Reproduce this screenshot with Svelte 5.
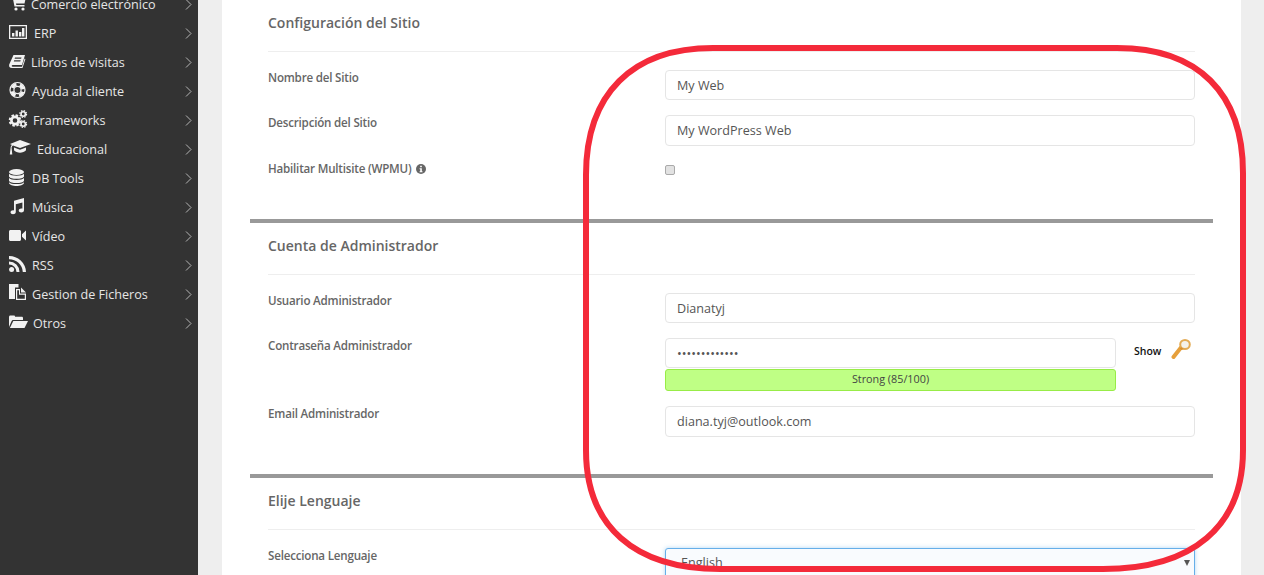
<script lang="ts">
	const menu = [
		{ label: 'Comercio electrónico', icon: 'cart', gap: 4 },
		{ label: 'ERP', icon: 'chart', gap: 7 },
		{ label: 'Libros de visitas', icon: 'book', gap: 4 },
		{ label: 'Ayuda al cliente', icon: 'life', gap: 5 },
		{ label: 'Frameworks', icon: 'cogs', gap: 6 },
		{ label: 'Educacional', icon: 'grad', gap: 10 },
		{ label: 'DB Tools', icon: 'db', gap: 5 },
		{ label: 'Música', icon: 'music', gap: 5 },
		{ label: 'Vídeo', icon: 'video', gap: 5 },
		{ label: 'RSS', icon: 'rss', gap: 5 },
		{ label: 'Gestion de Ficheros', icon: 'files', gap: 5 },
		{ label: 'Otros', icon: 'folder', gap: 6 }
	];
</script>

<div class="page">
	<aside class="sidebar">
		{#each menu as item}
			<div class="item">
				<svg class="icon" viewBox="0 0 18 18" fill="currentColor">
					{#if item.icon === 'cart'}
						<path d="M3 0h2.500l.5 2h11l-1.500 6.500H7l.3 1.500h8.200v1.500H5.500L3.500 1.500H3z" /><circle cx="7" cy="14" r="1.600" /><circle cx="14" cy="14" r="1.600" />
					{:else if item.icon === 'chart'}
						<path fill-rule="evenodd" d="M0 1h18v14H0zM1.300 2.300v11.400h15.400V2.300z" /><path d="M3 9h2.400v3.500H3zM6.500 6.500h2.400v6H6.500zM10 8h2.400v4.500H10zM13 4h2.400v8.500H13z" />
					{:else if item.icon === 'book'}
						<path fill-rule="evenodd" d="M4.500 2H16l-3 10H3.800c-1.500 0-1.500 1.800 0 1.800H13l2.600-8.300.8.500-2.900 9H3c-2.500 0-3.300-1.500-2.800-3.500zM6 4.500l-.4 1.200h6.500l.4-1.200zM5.200 7.200l-.4 1.200h6.500l.4-1.200z" />
					{:else if item.icon === 'life'}
						<g fill="none" stroke="currentColor">
							<circle cx="8.500" cy="8" r="7.500" stroke-width="1.200" />
							<circle cx="8.500" cy="8" r="3.600" stroke-width="1.200" />
							<circle cx="8.500" cy="8" r="5.600" stroke-width="3.200" stroke-dasharray="5.200 3.600" stroke-dashoffset="-1.800" />
						</g>
					{:else if item.icon === 'cogs'}
						<g fill="none" stroke="currentColor">
							<circle cx="6" cy="9.500" r="3.600" stroke-width="2.600" />
							<circle cx="6" cy="9.500" r="5.300" stroke-width="2" stroke-dasharray="2.500 1.660" />
							<circle cx="14.200" cy="3" r="2.200" stroke-width="1.600" />
							<circle cx="14.200" cy="3" r="3.400" stroke-width="1.200" stroke-dasharray="1.500 1.170" />
							<circle cx="14.200" cy="13" r="2.200" stroke-width="1.600" />
							<circle cx="14.200" cy="13" r="3.400" stroke-width="1.200" stroke-dasharray="1.500 1.170" />
						</g>
					{:else if item.icon === 'grad'}
						<path d="M11 0l11 4-11 4-7-2.600c-1 .4-1.300 1.300-1.400 2.500l.7 6.600H.8l.8-6.600C1.700 6.400 2 5.400 3 4.900L1 4z" /><path d="M5 7.500l6 2.200 6-2.200v2.800c-1.200 1.500-3.800 2.500-6 2.500s-4.800-1-6-2.500z" />
					{:else if item.icon === 'db'}
						<ellipse cx="7.500" cy="3" rx="7.500" ry="3" /><path d="M0 4.800C1.500 7.300 13.500 7.300 15 4.800v2.700c-1 3.100-14 3.100-15 0zM0 9C1.500 11.500 13.500 11.500 15 9v2.700c-1 3.100-14 3.100-15 0zM0 13.200c1.500 2.500 13.500 2.500 15 0V14c-1 3.900-14 3.900-15 0z" />
					{:else if item.icon === 'music'}
						<path d="M5 2.800L15 0v12.300c0 1.500-1.400 2.200-2.800 2.200-1.300 0-2.500-.7-2.500-2s1.200-2.100 2.500-2.100c.5 0 .9.100 1.200.2V4.400L6.800 6.200V14c0 1.500-1.400 2.200-2.800 2.200-1.300 0-2.500-.7-2.500-2s1.200-2 2.500-2c.4 0 .7 0 1 .2z" />
					{:else if item.icon === 'video'}
						<path d="M1.500 3h9c.8 0 1.500.7 1.500 1.500v8c0 .8-.7 1.500-1.500 1.500h-9C.7 14 0 13.300 0 12.500v-8C0 3.700.7 3 1.500 3zM13 7.200L17 3.500v10L13 9.800z" />
					{:else if item.icon === 'rss'}
						<circle cx="2.600" cy="13.400" r="2.500" /><path d="M0 5.500A10.500 10.500 0 0 1 10.500 16H7.500A7.500 7.500 0 0 0 0 8.500zM0 0a16.900 16.900 0 0 1 17 16h-3.200A13.700 13.700 0 0 0 0 3.200z" />
					{:else if item.icon === 'files'}
						<path d="M0 -1h9.500v3.500H6V14H0z" /><path fill-rule="evenodd" d="M7 4h4v4.500h6V15H7zM8.200 5.200v8.600h7.600V9.800H10V5.200z" /><path d="M12 2.500l5 5h-5z" />
					{:else}
						<path d="M0 13V3c0-.9.600-1.500 1.300-1.500h3.500c.8 0 1.200.5 1.300 1.300h6.600c.7 0 1.300.5 1.300 1.200V6H4.500c-1 0-1.600.4-2 1.200z" /><path d="M4.300 7H19l-3.500 7H.9z" />
					{/if}
				</svg>
				<span class="label" style="margin-left: {item.gap}px">{item.label}</span>
				<svg class="chevron" viewBox="0 0 7 11" fill="none" stroke="currentColor"><path d="M1 .5l5 5-5 5" /></svg>
			</div>
		{/each}
	</aside>

	<main class="panel">
		<section class="section">
			<h3>Configuración del Sitio</h3>
			<div class="row">
				<span class="name">Nombre del Sitio</span>
				<div class="field"><input value="My Web" /></div>
			</div>
			<div class="row">
				<span class="name">Descripción del Sitio</span>
				<div class="field"><input class="tall" value="My WordPress Web" /></div>
			</div>
			<div class="row">
				<span class="name">Habilitar Multisite (WPMU)
					<svg class="info" viewBox="0 0 12 12"><circle cx="6" cy="6" r="6" fill="#666" /><path d="M5 2h2v1.900H5zM4.300 5H7v3.700h.8V10H4.300V8.700h.8V6.300h-.8z" fill="#fff" /></svg>
				</span>
				<div class="field"><input type="checkbox" /></div>
			</div>
		</section>

		<section class="section">
			<h3>Cuenta de Administrador</h3>
			<div class="row">
				<span class="name">Usuario Administrador</span>
				<div class="field"><input value="Dianatyj" /></div>
			</div>
			<div class="row">
				<span class="name">Contraseña Administrador</span>
				<div class="field">
					<div class="pass-line">
						<div class="pass-box">
							<input type="password" value="abcdefghijklm" />
							<div class="strength">Strong (85/100)</div>
						</div>
						<span class="show">Show</span>
						<svg class="key" viewBox="0 0 20 22">
							<path d="M10 9.500L2.500 19" stroke="#e6a03c" stroke-width="4" stroke-linecap="round" fill="none" />
							<ellipse cx="14" cy="6.500" rx="4.800" ry="4.500" fill="#f4f1ea" stroke="#e3ab55" stroke-width="2" />
							<path d="M10.200 9.200l2.500 1.800-2 1-2-1.500z" fill="#d98f2e" />
						</svg>
					</div>
				</div>
			</div>
			<div class="row">
				<span class="name">Email Administrador</span>
				<div class="field"><input class="tall" value="diana.tyj@outlook.com" /></div>
			</div>
		</section>

		<section class="section last">
			<h3>Elije Lenguaje</h3>
			<div class="row">
				<span class="name">Selecciona Lenguaje</span>
				<div class="field">
					<div class="select">English<span class="caret"></span></div>
				</div>
			</div>
		</section>
	</main>

	<svg class="marker" viewBox="0 0 1264 575" fill="none">
		<path d="M713 48H1117C1198 48 1243 93 1243 173V450C1243 526 1193 569 1103 569H720C634 569 586 526 586 450V175C586 94 632 48 713 48Z" stroke="#f42a3a" stroke-width="6" />
	</svg>
</div>

<style>
	:global(body) {
		margin: 0;
		font-family: "Open Sans", "Liberation Sans", sans-serif;
	}

	.page {
		position: relative;
		display: flex;
		width: 1264px;
		height: 575px;
		overflow: hidden;
		background: #eeeeee;
	}

	.sidebar {
		flex: none;
		width: 198px;
		margin-top: -10px;
		background: #333333;
		color: #e6e6e6;
	}

	.item {
		display: flex;
		align-items: center;
		height: 29px;
		padding: 0 6px 0 9px;
		font-size: 12.6px;
	}

	.icon {
		flex: none;
		width: 18px;
		height: 18px;
		margin-bottom: 1px;
		overflow: visible;
		color: #f2f2f2;
	}

	.label {
		flex: 1;
		white-space: nowrap;
	}

	.chevron {
		flex: none;
		width: 7px;
		height: 11px;
		color: #b5b5b5;
	}

	.panel {
		flex: none;
		box-sizing: border-box;
		width: 1019px;
		margin-left: 24px;
		padding: 0 28px;
		background: #ffffff;
	}

	.section {
		box-sizing: border-box;
		height: 255px;
		padding: 0 18px;
		border-bottom: 4px solid #999999;
	}

	.section:first-child {
		height: 223px;
	}

	.section.last {
		border-bottom: 0;
	}

	h3 {
		box-sizing: border-box;
		height: 52px;
		margin: 0 0 18px;
		padding-top: 13px;
		border-bottom: 1px solid #eeeeee;
		font-size: 14px;
		line-height: 20px;
		font-weight: 600;
		color: #666666;
	}

	.row {
		display: grid;
		grid-template-columns: 397px 1fr;
		margin-bottom: 15px;
	}

	.name {
		font-size: 11.6px;
		line-height: 16px;
		font-weight: 600;
		letter-spacing: -0.2px;
		color: #666666;
	}

	.info {
		width: 10px;
		height: 10px;
		margin-left: 2px;
		vertical-align: -1px;
	}

	input:not([type="checkbox"]) {
		display: block;
		box-sizing: border-box;
		width: 100%;
		height: 30px;
		padding: 0 11px;
		border: 1px solid #e5e5e5;
		border-radius: 4px;
		outline: none;
		font: 12.6px "Open Sans", "Liberation Sans", sans-serif;
		color: #555555;
		background: #ffffff;
	}

	input.tall {
		height: 31px;
		padding-bottom: 1px;
	}

	input[type="checkbox"] {
		display: block;
		box-sizing: border-box;
		width: 10px;
		height: 10px;
		margin: 4px 0 0;
		appearance: none;
		border: 1px solid #aaaaaa;
		border-radius: 2px;
		background: #e2e2e2;
	}

	.pass-line {
		display: flex;
		align-items: flex-start;
	}

	.pass-box {
		flex: none;
		width: 451px;
	}

	.strength {
		box-sizing: border-box;
		height: 22px;
		margin-top: 1px;
		border: 1px solid #98ec47;
		border-radius: 3px;
		background: #bfff85;
		font-size: 10.8px;
		line-height: 18px;
		text-align: center;
		color: #444444;
	}

	.show {
		margin: 6px 0 0 18px;
		font-size: 10.5px;
		line-height: 15px;
		font-weight: 600;
		color: #111111;
	}

	.key {
		width: 20px;
		height: 22px;
		margin-left: 10px;
	}

	.select {
		position: relative;
		box-sizing: border-box;
		height: 34px;
		padding: 4px 15px;
		border: 1px solid #66afe9;
		border-radius: 3px;
		background: #f9fbfe;
		box-shadow: 0 0 4px rgba(102, 175, 233, 0.5);
		font-size: 12.6px;
		line-height: 20px;
		color: #555555;
	}

	.caret {
		position: absolute;
		top: 11px;
		right: 4px;
		border-top: 6px solid #555555;
		border-left: 3px solid transparent;
		border-right: 3px solid transparent;
	}

	.marker {
		position: absolute;
		inset: 0;
		width: 1264px;
		height: 575px;
		pointer-events: none;
	}
</style>
